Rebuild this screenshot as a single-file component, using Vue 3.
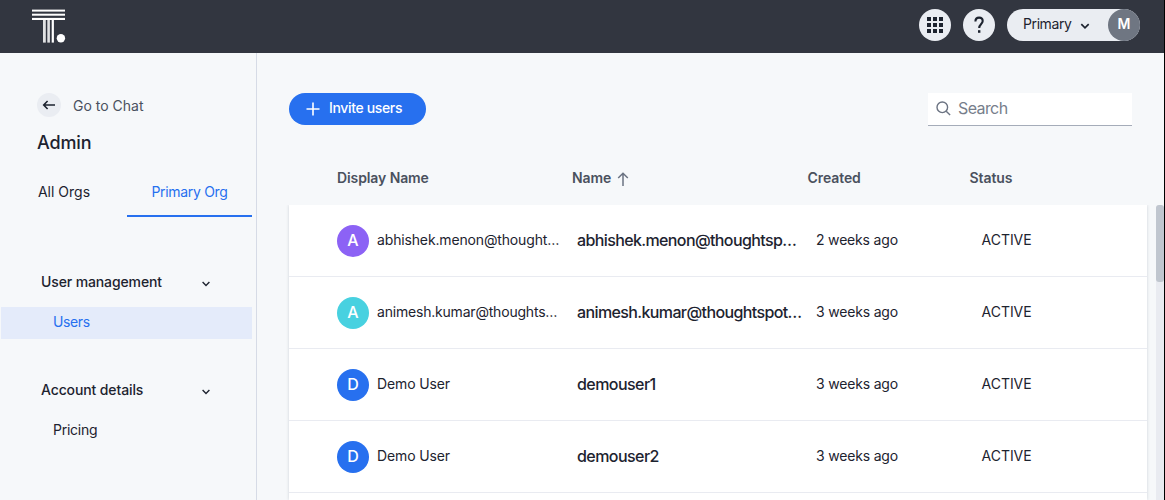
<script setup>
const rows = [
  { initial: 'A', tone: 'violet', display: 'abhishek.menon@thought…', name: 'abhishek.menon@thoughtsp…', created: '2 weeks ago', fit: 'r0' },
  { initial: 'A', tone: 'cyan', display: 'animesh.kumar@thoughts…', name: 'animesh.kumar@thoughtspot…', created: '3 weeks ago', fit: 'r1' },
  { initial: 'D', tone: 'blue', display: 'Demo User', name: 'demouser1', created: '3 weeks ago', fit: 'r2' },
  { initial: 'D', tone: 'blue', display: 'Demo User', name: 'demouser2', created: '3 weeks ago', fit: 'r2' },
  { initial: '', tone: '', display: '', name: '', created: '', fit: '' },
]
const menu = [
  { title: 'User management', item: 'Users', active: true },
  { title: 'Account details', item: 'Pricing', active: false },
]
</script>

<template>
  <div class="page">
    <header class="topbar">
      <svg class="logo" width="34" height="35" viewBox="0 0 34 35" fill="#fff">
        <rect x="0" y="0.6" width="33" height="2" />
        <rect x="0" y="4.7" width="33" height="2" />
        <rect x="0" y="8.9" width="33" height="2.1" />
        <rect x="11" y="11" width="2.8" height="22.6" opacity=".85" />
        <rect x="15.3" y="11" width="2.6" height="22.6" opacity=".85" />
        <rect x="19.7" y="11" width="2.2" height="22.6" />
        <circle cx="28.9" cy="29.3" r="4.2" />
      </svg>
      <div class="tools">
        <button class="round">
          <svg width="16" height="16" viewBox="0 0 16 16" fill="#1d232f">
            <template v-for="r in 3" :key="r">
              <rect v-for="c in 3" :key="c" :x="(c - 1) * 6" :y="(r - 1) * 6" width="4" height="4" />
            </template>
          </svg>
        </button>
        <button class="round">
          <svg width="12" height="18" viewBox="0 0 12 18" fill="none" stroke="#1d232f" stroke-width="2.1">
            <path d="M2.4 5.6C2.4 3 4 1.6 6.1 1.6S9.7 3 9.7 5.1C9.7 7.7 6.2 8.3 6.2 11.9" />
            <path d="M6.2 14.2v2.6" stroke-width="2.4" />
          </svg>
        </button>
        <button class="org">
          <span class="t org-name">Primary</span>
          <svg class="org-chev" width="10" height="7" viewBox="0 0 10 7" fill="none" stroke="#1d232f" stroke-width="1.7"><path d="M1.3 1.2 5 4.8l3.7-3.6" /></svg>
          <span class="me">M</span>
        </button>
      </div>
    </header>

    <div class="body">
      <aside class="side">
        <div class="back">
          <span class="back-icon">
            <svg width="14" height="10" viewBox="0 0 14 10" fill="none" stroke="#1d232f" stroke-width="1.6"><path d="M13 5H2M5.6 1 1.7 5l3.9 4" /></svg>
          </span>
          <span class="t back-text">Go to Chat</span>
        </div>
        <h1><span class="t admin">Admin</span></h1>
        <nav class="tabs">
          <a class="tab"><span class="t all">All Orgs</span></a>
          <a class="tab on"><span class="t prim">Primary Org</span></a>
        </nav>
        <section v-for="m in menu" :key="m.title" class="group">
          <div class="group-head">
            <span class="t group-title">{{ m.title }}</span>
            <svg width="8" height="6" viewBox="0 0 8 6" fill="none" stroke="#1d232f" stroke-width="1.4"><path d="M.6 1 4 4.4 7.4 1" /></svg>
          </div>
          <div class="item" :class="{ active: m.active }"><span class="t">{{ m.item }}</span></div>
        </section>
      </aside>

      <main class="main">
        <div class="actions">
          <button class="invite">
            <svg width="14" height="14" viewBox="0 0 14 14" stroke="#fff" stroke-width="1.6"><path d="M7 .5v13M.5 7h13" /></svg>
            <span class="t inv">Invite users</span>
          </button>
          <label class="search">
            <svg width="15" height="15" viewBox="0 0 15 15" fill="none" stroke="#6b7382" stroke-width="1.4"><circle cx="6.3" cy="6.3" r="5.3" /><path d="m10.2 10.2 3.9 3.9" /></svg>
            <span class="t se">Search</span>
          </label>
        </div>
        <div class="grid thead">
          <span><span class="t dn">Display Name</span></span>
          <span class="sorted"><span class="t nm">Name</span>
            <svg width="12" height="14" viewBox="0 0 12 14" fill="none" stroke="#6b7382" stroke-width="1.5"><path d="M6 14V1.4M1.2 6 6 1.2 10.8 6" /></svg>
          </span>
          <span><span class="t cr">Created</span></span>
          <span><span class="t st">Status</span></span>
        </div>
        <div class="list">
          <div class="card">
            <div v-for="(r, i) in rows" :key="i" class="grid row" :class="r.fit">
              <template v-if="r.name">
                <div class="who">
                  <span class="avatar" :class="r.tone">{{ r.initial }}</span>
                  <span class="t display">{{ r.display }}</span>
                </div>
                <div class="name"><span class="t">{{ r.name }}</span></div>
                <div class="created"><span class="t ago">{{ r.created }}</span></div>
                <div class="status"><span class="t act">ACTIVE</span></div>
              </template>
            </div>
          </div>
          <div class="track"><div class="thumb"></div></div>
        </div>
      </main>
    </div>
  </div>
</template>

<style>
body { margin: 0; overflow: hidden; }
</style>

<style scoped>
* { box-sizing: border-box; }
.page {
  width: 1165px; height: 500px; overflow: hidden; display: flex; flex-direction: column;
  font-family: Inter, "Liberation Sans", sans-serif; font-size: 14px; line-height: 20px;
  color: #1d232f; background: #f6f8fa; border-right: 1px solid #000;
}
.t { white-space: nowrap; display: inline-block; }
button { border: 0; padding: 0; font: inherit; color: inherit; }
svg { display: block; flex: none; }
.topbar {
  height: 53px; flex: none; background: #323640; display: flex; justify-content: space-between;
  align-items: flex-start; padding: 9px 24px 0 32px;
}
.tools { display: flex; gap: 12px; }
.round {
  width: 32px; height: 32px; border-radius: 50%; background: #eaedf2;
  display: flex; align-items: center; justify-content: center;
}
.org { display: flex; align-items: center; width: 133px; height: 32px; border-radius: 16px; background: #eaedf2; padding-left: 16px; }
.org-name { width: 48px; margin-top: -2px; text-align: left; letter-spacing: -.4px; }
.org-chev { margin: 2px 0 0 9px; }
.me {
  margin-left: auto; width: 32px; height: 32px; border-radius: 50%; background: #6f7682; color: #fff;
  font-weight: 600; font-size: 14px; line-height: 30px; text-align: center;
}
.body { flex: 1; min-height: 0; display: flex; }
.side { width: 257px; flex: none; border-right: 1px solid #d6dbe6; padding-top: 40px; }
.back { display: flex; align-items: center; gap: 12px; margin-left: 37px; height: 24px; color: #4a515e; }
.back-icon { width: 24px; height: 24px; border-radius: 50%; background: #eaedf2; display: flex; align-items: center; justify-content: center; }
.back-text { margin-top: 2px; }
h1 { margin: 14px 0 0 37px; font-size: 18px; line-height: 24px; font-weight: 500; letter-spacing: -.15px; }
.tabs { display: flex; margin: 13px 0 0 1px; height: 49px; }
.tab { width: 126px; display: flex; justify-content: center; padding-top: 14px; }
.tab.on { width: 125px; color: #2770ef; border-bottom: 2px solid #2770ef; letter-spacing: -.32px; }
.group { height: 108px; }
.tabs + .group { margin-top: 50px; }
.group-head { display: flex; align-items: center; justify-content: space-between; height: 30px; padding: 0 46px 0 41px; font-weight: 500; letter-spacing: -.12px; }
.group-head svg { margin-top: 4px; }
.item { margin: 10px 4px 0 1px; height: 32px; line-height: 30px; padding-left: 52px; letter-spacing: -.25px; }
.item.active { background: #e4ebfa; color: #2770ef; letter-spacing: -.4px; }
.main { flex: 1; min-width: 0; display: flex; flex-direction: column; padding: 40px 0 0 32px; }
.actions { display: flex; justify-content: space-between; padding-right: 32px; }
.invite { display: flex; align-items: center; gap: 9px; width: 137px; height: 32px; border-radius: 16px; background: #2770ef; color: #fff; padding-left: 17px; font-weight: 500; letter-spacing: -.35px; }
.invite .t { margin-top: -2px; }
.search { display: flex; align-items: center; gap: 7px; width: 204px; height: 33px; padding-left: 8px; background: #fff; border-bottom: 1px solid #a5acb9; color: #777e8b; font-size: 16px; letter-spacing: -.6px; }
.search .t { margin-top: -2px; }
.search svg { margin-top: -1px; }
.grid { display: grid; grid-template-columns: 235px 235px 162px 1fr; padding-left: 48px; }
.thead { height: 79px; padding-top: 42px; font-weight: 600; color: #4a515e; letter-spacing: -.1px; }
.cr, .st { margin-left: .6px; }
.sorted { display: flex; gap: 6px; }
.sorted svg { margin-top: 4px; }
.list { flex: 1; min-height: 0; display: flex; justify-content: space-between; }
.card { width: 858px; background: #fff; box-shadow: 0 0 3px rgba(30, 40, 60, .18); clip-path: inset(0 -4px 0 -4px); height: 295px; }
.row { height: 72px; border-bottom: 1px solid #e9ebf1; align-items: center; }
.who { display: flex; align-items: center; gap: 8px; }
.avatar { width: 32px; height: 32px; border-radius: 50%; color: #fff; text-align: center; font-size: 16px; line-height: 31px; font-weight: 500; }
.violet { background: #8c62f5; }
.cyan { background: #48d1e0; }
.blue { background: #2770ef; }
.display { margin-top: -2px; letter-spacing: -.12px; }
.r0 .display { letter-spacing: -.15px; }
.r1 .display { letter-spacing: -.2px; }
.name { padding-left: 5px; font-size: 16px; font-weight: 500; margin-top: -2px; letter-spacing: -.62px; }
.r2 .name { letter-spacing: -.55px; }
.created { padding-left: 9px; margin-top: -2px; letter-spacing: -.18px; }
.status { padding-left: 12.6px; margin-top: -2px; letter-spacing: -.05px; }
.track { width: 8px; background: #e9ebf1; border-radius: 4px 4px 0 0; }
.thumb { height: 77px; background: #c0c6cf; border-radius: 3px; }
</style>
